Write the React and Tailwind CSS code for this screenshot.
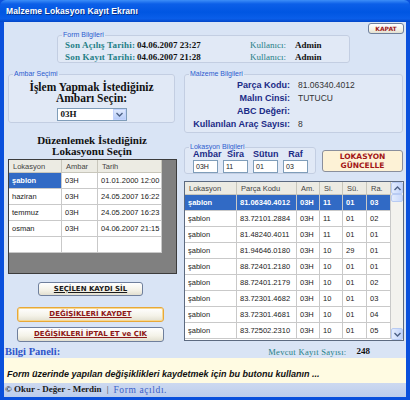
import React from "react";

const serif = "font-['Liberation_Serif',serif]";
const sans = "font-['Liberation_Sans',sans-serif]";
const verd = "font-['DejaVu_Sans',sans-serif]";

const leftRows = [
  ["şablon", "03H", "01.01.2000 12:00"],
  ["haziran", "03H", "24.05.2007 16:22"],
  ["temmuz", "03H", "24.05.2007 16:23"],
  ["osman", "03H", "04.06.2007 21:15"],
  ["", "", ""],
];

const rightRows = [
  ["şablon", "81.06340.4012", "03H", "11", "01", "03"],
  ["şablon", "83.72101.2884", "03H", "11", "01", "02"],
  ["şablon", "81.48240.4011", "03H", "11", "01", "01"],
  ["şablon", "81.94646.0180", "03H", "10", "29", "01"],
  ["şablon", "88.72401.2180", "03H", "10", "01", "01"],
  ["şablon", "88.72401.2179", "03H", "10", "01", "02"],
  ["şablon", "83.72301.4682", "03H", "10", "01", "03"],
  ["şablon", "83.72301.4681", "03H", "10", "01", "04"],
  ["şablon", "83.72502.2310", "03H", "10", "01", "05"],
];

const rightCols = ["w-[52px]", "w-[60px]", "w-[23px]", "w-[23px]", "w-[24px]", "w-[24px]"];
const rightHead = ["Lokasyon", "Parça Kodu", "Am.", "Si.", "Sü.", "Ra."];
const leftCols = ["w-[53px]", "w-[36px]", "w-[64px]"];

function Group({ legend, className, children }) {
  return (
    <fieldset className={`border border-[#c3cee2] rounded-[3px] bg-[#e1e9f6] ${className}`}>
      <legend className={`ml-[4px] px-[1px] text-[7px] leading-[8px] text-[#2d5ccf] ${sans}`}>{legend}</legend>
      {children}
    </fieldset>
  );
}

function XpButton({ children, className, hot }) {
  return (
    <div
      className={`flex items-center justify-center rounded-[3px] border ${
        hot ? "border-[#e8a838] shadow-[inset_0_0_0_1px_#f8d890]" : "border-[#6f7f9c]"
      } bg-[linear-gradient(to_bottom,#ffffff,#f4f2e8_60%,#e2dfd0)] ${className}`}
    >
      {children}
    </div>
  );
}

function Chevron({ up }) {
  return (
    <svg width="7" height="5" viewBox="0 0 7 5">
      <path d={up ? "M0.5 4 L3.5 1 L6.5 4" : "M0.5 1 L3.5 4 L6.5 1"} fill="none" stroke="#4d6185" strokeWidth="1.4" />
    </svg>
  );
}

function InfoRow({ label, date }) {
  return (
    <div className="flex whitespace-nowrap">
      <span className="w-[72px] text-[#1f7f86] tracking-[0.2px]">{label}</span>
      <span className="w-[113px] text-[#111]">{date}</span>
      <span className="w-[45px] text-[#1f7f86] font-normal">Kullanıcı:</span>
      <span className="text-[#111]">Admin</span>
    </div>
  );
}

export default function App() {
  return (
    <div className={`w-[410px] h-[400px] flex flex-col overflow-hidden bg-[#0a50dc] ${sans}`}>
      {/* title bar */}
      <div className="h-[22px] shrink-0 rounded-t-[6px] flex items-center pl-[6px] bg-[linear-gradient(to_bottom,#3d8ef8_0%,#0c5fe8_18%,#0056e2_55%,#0a5ee9_85%,#0245c8_100%)]">
        <span className="text-white font-bold text-[8.5px] tracking-[0.1px] [text-shadow:1px_1px_0_#0a2f86]">
          Malzeme Lokasyon Kayıt Ekranı
        </span>
      </div>

      <div className="flex-1 flex flex-col mx-[4px] mb-[4px] bg-[#d9e4f5]">
        {/* top row */}
        <div className="h-[44px] shrink-0 flex items-start">
          <Group legend="Form Bilgileri" className="ml-[53px] mt-[9px] w-[293px] h-[32px]">
            <div className={`pl-[7px] ${serif} font-bold text-[9px] leading-[12px]`}>
              <InfoRow label="Son Açılış Tarihi:" date="04.06.2007 23:27" />
              <InfoRow label="Son Kayıt Tarihi:" date="04.06.2007 21:28" />
            </div>
          </Group>
          <XpButton className="ml-auto mr-[2px] mt-[1px] w-[36px] h-[11px]">
            <span className={`${verd} font-bold text-[6px] text-[#9b1b1b]`}>KAPAT</span>
          </XpButton>
        </div>

        {/* middle */}
        <div className="h-[280px] shrink-0 flex">
          {/* left column */}
          <div className="w-[176px] flex flex-col">
            <Group legend="Ambar Seçimi" className="ml-[4px] mt-[4px] w-[167px] h-[53px] flex flex-col items-center">
              <div className={`${serif} font-bold text-[11.5px] leading-[11px] text-[#111] text-center mt-[4px] whitespace-nowrap`}>
                <div>İşlem Yapmak İstediğiniz</div>
                <div>Ambarı Seçin:</div>
              </div>
              <div className="mx-auto mt-[4px] w-[70px] h-[13px] bg-white border border-[#7f9db9] flex">
                <span className={`flex-1 pl-[3px] ${serif} font-bold text-[9px] leading-[11px] text-[#111]`}>03H</span>
                <div className="w-[13px] h-full flex items-center justify-center bg-[linear-gradient(to_bottom,#dfe9fd,#b8cdf8)] border border-[#c3d3fd]">
                  <Chevron />
                </div>
              </div>
            </Group>

            <div className={`mt-[12px] ${serif} font-bold text-[11px] leading-[11px] text-[#111] text-center`}>
              <div>Düzenlemek İstediğiniz</div>
              <div>Lokasyonu Seçin</div>
            </div>

            {/* left grid */}
            <div className="ml-[4px] mt-[2px] w-[169px] h-[115px] border border-[#3c3c3c] bg-[#808080]">
              <div className="w-[153px] bg-white">
                <div className="flex h-[13px] bg-[#ecebe3] border-b border-[#c8c6bb]">
                  {["Lokasyon", "Ambar", "Tarih"].map((h, i) => (
                    <div key={h} className={`${leftCols[i]} pl-[4px] border-r border-[#c8c6bb] text-[7.5px] leading-[13px] text-[#444]`}>{h}</div>
                  ))}
                </div>
                {leftRows.map((r, ri) => (
                  <div key={ri} className="flex h-[16px] border-b border-[#c9c9c9]">
                    {r.map((c, ci) => (
                      <div
                        key={ci}
                        className={`${leftCols[ci]} pl-[3px] border-r border-[#c9c9c9] text-[7.5px] leading-[15px] ${
                          ri === 0 && ci === 0 ? "bg-[#316ac5] text-white font-bold" : "text-[#222]"
                        }`}
                      >
                        {c}
                      </div>
                    ))}
                  </div>
                ))}
              </div>
            </div>

            <XpButton className="ml-[34px] mt-[8px] w-[105px] h-[14px]">
              <span className={`${verd} font-bold text-[7px] underline text-[#1a1a1a]`}>SEÇİLEN KAYDI SİL</span>
            </XpButton>
            <XpButton hot className="ml-[13px] mt-[11px] w-[147px] h-[15px]">
              <span className={`${verd} font-bold text-[7px] underline text-[#8e1616]`}>DEĞİŞİKLERİ KAYDET</span>
            </XpButton>
            <XpButton className="ml-[13px] mt-[5px] w-[147px] h-[15px]">
              <span className={`${verd} font-bold text-[7px] underline text-[#8e1616]`}>DEĞİŞİKLERİ İPTAL ET ve ÇIK</span>
            </XpButton>
          </div>

          {/* right column */}
          <div className="flex-1 flex flex-col">
            <Group legend="Malzeme Bilgileri" className="ml-[4px] mt-[4px] w-[219px] h-[63px]">
              <div className="mt-[1px]">
                {[
                  ["Parça Kodu:", "81.06340.4012"],
                  ["Malın Cinsi:", "TUTUCU"],
                  ["ABC Değeri:", ""],
                  ["Kullanılan Araç Sayısı:", "8"],
                ].map(([l, v]) => (
                  <div key={l} className="flex h-[13px] items-center whitespace-nowrap">
                    <span className="w-[105px] text-right font-bold text-[9px] leading-[11px] text-[#1b2b86]">{l}</span>
                    <span className="ml-[8px] text-[8.5px] leading-[11px] text-[#333]">{v}</span>
                  </div>
                ))}
              </div>
            </Group>

            <div className="flex mt-[10px]">
              <Group legend="Lokasyon Bilgileri" className="ml-[4px] w-[132px] h-[31px]">
                <div className="pl-[8px] grid grid-cols-[25px_25px_25px_25px] gap-x-[5px] -mt-[1px]">
                  {["Ambar", "Sira", "Sütun", "Raf"].map((l) => (
                    <div key={l} className="text-center font-bold text-[9px] leading-[8px] text-[#1b2b86] whitespace-nowrap">{l}</div>
                  ))}
                  {["03H", "11", "01", "03"].map((v, i) => (
                    <div key={i} className="mt-[2px] h-[13px] bg-white border border-[#7f9db9] pl-[2px] text-[7px] leading-[11px] text-[#222]">{v}</div>
                  ))}
                </div>
              </Group>
              <div className="ml-[6px] mt-[7px] w-[81px] h-[22px] rounded-[3px] border border-[#8a8f9c] bg-[#fdf2d6] flex flex-col items-center justify-center">
                <span className={`${verd} font-bold text-[7.5px] leading-[9px] text-[#a31616]`}>LOKASYON</span>
                <span className={`${verd} font-bold text-[7.5px] leading-[9px] text-[#a31616]`}>GÜNCELLE</span>
              </div>
            </div>

            {/* right grid */}
            <div className="ml-[4px] mt-[7px] w-[220px] h-[160px] border border-[#5c6a80] bg-white flex overflow-hidden">
              <div className="w-[206px]">
                <div className="flex h-[13px] bg-[#ecebe3] border-b border-[#c8c6bb]">
                  {rightHead.map((h, i) => (
                    <div key={h} className={`${rightCols[i]} pl-[4px] border-r border-[#c8c6bb] text-[7.5px] leading-[13px] text-[#444]`}>{h}</div>
                  ))}
                </div>
                {rightRows.map((r, ri) => (
                  <div
                    key={ri}
                    className={`flex h-[16px] border-b border-[#c9c9c9] ${ri === 0 ? "bg-[#316ac5] text-white font-bold" : "text-[#222]"}`}
                  >
                    {r.map((c, ci) => (
                      <div key={ci} className={`${rightCols[ci]} pl-[3px] border-r border-[#c9c9c9] text-[7.5px] leading-[15px]`}>{c}</div>
                    ))}
                  </div>
                ))}
              </div>
              <div className="w-[12px] flex flex-col bg-[#f3f2ee]">
                <div className="h-[12px] flex items-center justify-center rounded-[2px] bg-[linear-gradient(to_right,#e3ecfd,#c2d4fb)] border border-[#b8cbf3]">
                  <Chevron up />
                </div>
                <div className="h-[8px] rounded-[2px] bg-[linear-gradient(to_right,#e3ecfd,#c8d8fb)] border border-[#b8cbf3]" />
                <div className="flex-1" />
                <div className="h-[12px] flex items-center justify-center rounded-[2px] bg-[linear-gradient(to_right,#e3ecfd,#c2d4fb)] border border-[#b8cbf3]">
                  <Chevron />
                </div>
              </div>
            </div>
          </div>
        </div>

        {/* bilgi row */}
        <div className="h-[12px] shrink-0 flex items-center">
          <span className={`pl-[1px] ${serif} font-bold text-[10.5px] text-[#2f55c9]`}>Bilgi Paneli:</span>
          <span className={`ml-auto ${serif} text-[8.5px] tracking-[0.3px] text-[#1f7f86]`}>Mevcut Kayıt Sayısı:</span>
          <span className={`ml-[10px] mr-[36px] ${serif} font-bold text-[9px] text-[#111]`}>248</span>
        </div>

        {/* info panel */}
        <div className="h-[25px] shrink-0 bg-[#fffbe2] pl-[3px] pt-[2px]">
          <span className="italic font-bold text-[9px] text-[#111]">
            Form üzerinde yapılan değişiklikleri kaydetmek için bu butonu kullanın ...
          </span>
        </div>

        {/* status bar */}
        <div className="flex-1 flex items-center pl-[1px] bg-[linear-gradient(to_bottom,#cdd9f0,#bccdec)]">
          <span className={`${serif} font-bold text-[9px] text-[#1a1a1a]`}>© Okur - Değer - Merdin</span>
          <span className={`mx-[5px] ${serif} text-[9px] text-[#333]`}>|</span>
          <span className={`${serif} text-[9.5px] text-[#3a5fc8] tracking-[0.6px]`}>Form açıldı.</span>
        </div>
      </div>
    </div>
  );
}
